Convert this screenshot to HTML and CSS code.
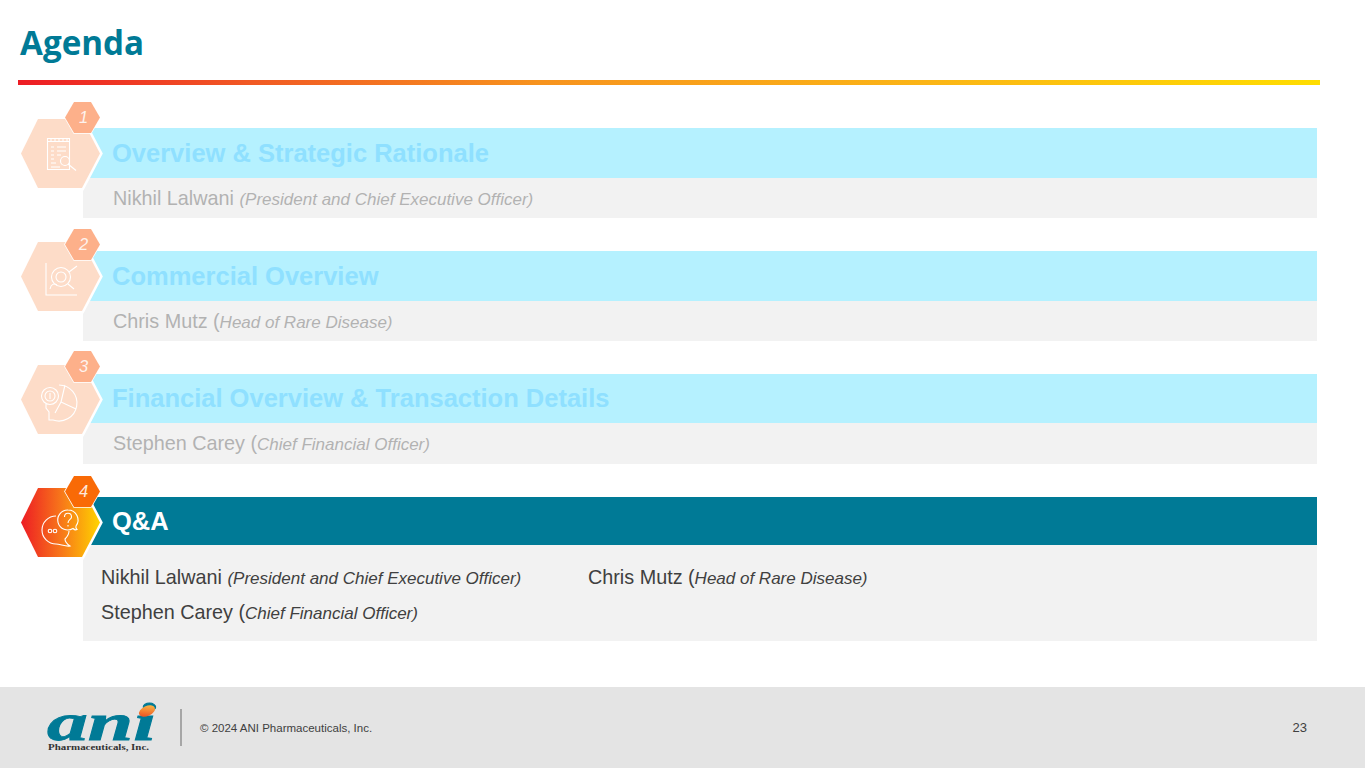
FILE: index.html
```html
<!DOCTYPE html>
<html lang="en">
<head>
<meta charset="utf-8">
<title>Agenda</title>
<link rel="stylesheet" href="styles.css">
</head>
<body>
<div class="slide">
  <header class="top">
    <h1>Agenda</h1>
    <div class="rule"></div>
  </header>
  <main class="list">
    <section class="row faded r1">
      <svg class="hex" viewBox="0 0 86 75"><polygon class="hp" points="3,37.500 20,3 64,3 82,37.500 64,72 20,72"/>
        <g class="ic"><path d="M29.500 22.500h22v31h-22zM29.500 25.500h22M33 22v3M37 22v3M41 22v3M45 22v3M49 22v3M33 31h3M39 31h9M33 35h3M39 35h9M33 39h3M39 39h4M33 43h3M33 47h5M33 51h9"/><circle cx="47" cy="45" r="4.500"/><path d="M50 48l8 6.500"/></g></svg>
      <div class="mini"><svg viewBox="0 0 39 35"><polygon points="2,17.500 11,2 28,2 37,17.500 28,33 11,33"/></svg><span>1</span></div>
      <div class="head">Overview &amp; Strategic Rationale</div>
      <div class="sub"><span class="person">Nikhil Lalwani <em>(President and Chief Executive Officer)</em></span></div>
    </section>
    <section class="row faded r2">
      <svg class="hex" viewBox="0 0 86 75"><polygon class="hp" points="3,37.500 20,3 64,3 82,37.500 64,72 20,72"/>
        <g class="ic"><path d="M28 24v32h31"/><circle cx="43" cy="38" r="9.500"/><circle cx="43" cy="38" r="5"/><path d="M50 45l6 5M32 50c1-5 4-6 7-4M51 33l8-6"/></g></svg>
      <div class="mini"><svg viewBox="0 0 39 35"><polygon points="2,17.500 11,2 28,2 37,17.500 28,33 11,33"/></svg><span>2</span></div>
      <div class="head">Commercial Overview</div>
      <div class="sub"><span class="person">Chris Mutz (<em>Head of Rare Disease)</em></span></div>
    </section>
    <section class="row faded r3">
      <svg class="hex" viewBox="0 0 86 75"><polygon class="hp" points="3,37.500 20,3 64,3 82,37.500 64,72 20,72"/>
        <g class="ic"><path d="M41 23a18 18 0 1 1-6 35h-4v-8l-3-4v-4M47 23l-4 17 15 7M43 40l-6 11"/><circle cx="32" cy="34" r="8.500"/><circle cx="32" cy="34" r="5"/><path d="M32 31v6"/></g></svg>
      <div class="mini"><svg viewBox="0 0 39 35"><polygon points="2,17.500 11,2 28,2 37,17.500 28,33 11,33"/></svg><span>3</span></div>
      <div class="head">Financial Overview &amp; Transaction Details</div>
      <div class="sub"><span class="person">Stephen Carey (<em>Chief Financial Officer)</em></span></div>
    </section>
    <section class="row current r4">
      <svg class="hex" viewBox="0 0 86 75">
        <defs><linearGradient id="heat" x1="0" x2="1" y1="0" y2="0"><stop offset="0" stop-color="#ed1c24"/><stop offset="0.500" stop-color="#f7751a"/><stop offset="1" stop-color="#ffd400"/></linearGradient></defs>
        <polygon class="hp hot" points="3,37.500 20,3 64,3 82,37.500 64,72 20,72"/>
        <g class="ic"><path d="M38 31A14 14 0 1 0 38 59C42 59 48 62 52 61C49 59 47 56 47 54C50 51 51 49 51 46"/><circle cx="32" cy="46" r="1.800"/><circle cx="37" cy="46" r="1.800"/><path d="M50 25a10 10 0 1 0 5 18.500c1 1 3 1.500 4 1-1-1-1.500-2-1-3.500A10 10 0 0 0 50 25z"/><path d="M46.500 32c0-5 7-5 7 0 0 2.500-3.500 2.500-3.500 6M50 40v1.500"/></g></svg>
      <div class="mini"><svg viewBox="0 0 39 35"><polygon points="2,17.500 11,2 28,2 37,17.500 28,33 11,33"/></svg><span>4</span></div>
      <div class="head">Q&amp;A</div>
      <div class="sub grid">
        <span class="person">Nikhil Lalwani <em>(President and Chief Executive Officer)</em></span>
        <span class="person">Chris Mutz (<em>Head of Rare Disease)</em></span>
        <span class="person">Stephen Carey (<em>Chief Financial Officer)</em></span>
      </div>
    </section>
  </main>
  <footer class="foot">
    <svg class="logo" viewBox="0 0 112 48">
      <defs><linearGradient id="dot" x1="0" x2="1" y1="1" y2="0"><stop offset="0" stop-color="#e8401c"/><stop offset="1" stop-color="#ffc84a"/></linearGradient></defs>
      <text class="ani" x="1" y="36" textLength="109" lengthAdjust="spacingAndGlyphs">ani</text>
      <ellipse cx="101" cy="7" rx="8.500" ry="5" transform="rotate(-25 101 7)" fill="url(#dot)"/>
      <text class="pharma" x="2" y="46" textLength="101" lengthAdjust="spacingAndGlyphs">Pharmaceuticals, Inc.</text>
    </svg>
    <div class="sep"></div>
    <div class="copy">© 2024 ANI Pharmaceuticals, Inc.</div>
    <div class="page">23</div>
  </footer>
</div>
</body>
</html>
```
FILE: styles.css
```css
* { box-sizing: border-box; }
html, body { margin: 0; padding: 0; background: #fff; }
.slide {
  width: 1365px; height: 768px; overflow: hidden;
  display: flex; flex-direction: column;
  font-family: "Liberation Sans", Arial, sans-serif;
}
.top { padding: 0 45px 0 18px; }
.top h1 {
  margin: 0; height: 80px; padding: 21px 0 0 2px;
  font: 700 33.200px/44px "Open Sans", sans-serif;
  color: #007a96;
}
.rule {
  height: 5px;
  background: linear-gradient(90deg, #ed1c24 0%, #f15a24 18%, #f7931e 40%, #fbb516 70%, #ffdd00 100%);
}
.list {
  flex: 1; padding: 43px 48.500px 0 83px;
  display: flex; flex-direction: column; gap: 33px;
}
.row { position: relative; }
.head {
  height: 50px; padding-left: 29px;
  display: flex; align-items: center;
  font-size: 25.500px; font-weight: 700;
  background: #007a96; color: #fff;
}
.sub {
  height: 40px; padding-left: 30px;
  display: flex; align-items: center;
  background: #f2f2f2; color: #404040;
  font-size: 19.800px;
}
.person em { font-size: 17px; }
.faded .head { background: #b5f1ff; color: #8fe0ff; }
.faded .sub { color: #b2b2b2; }
.r3 .head { height: 49px; }
.r3 .sub { height: 41px; }
.r4 .head { height: 48px; }
.grid {
  height: 96px; padding: 15px 0 0 18px;
  display: grid; grid-template-columns: 487px 1fr;
  grid-auto-rows: 35px; align-items: center; align-content: start;
}
.hex {
  position: absolute; left: -65px; top: -12px;
  width: 86px; height: 75px; z-index: 1;
}
.hp { fill: #fddcc8; stroke: #fff; stroke-width: 5; paint-order: stroke; }
.hp.hot { fill: url(#heat); }
.ic path, .ic circle { fill: none; stroke: #fff; stroke-width: 1.100; }
.mini {
  position: absolute; left: -20px; top: -28px;
  width: 39px; height: 35px; z-index: 2;
  display: flex; align-items: center; justify-content: center;
  color: #fff; font-size: 16.500px; font-style: italic;
}
.mini svg { position: absolute; inset: 0; width: 100%; height: 100%; }
.mini polygon { fill: #fdb08a; stroke: #fff; stroke-width: 1.500; paint-order: stroke; }
.mini span { position: relative; left: 1px; opacity: 0.850; }
.r2 .mini { top: -24px; }
.r3 .mini { top: -25px; }
.r4 .mini { top: -23px; }
.r4 .mini polygon { fill: #f96a06; }
.foot {
  height: 81px; background: #e4e4e4;
  display: flex; align-items: center;
  padding: 0 58px 0 46px;
}
.logo { width: 112px; height: 48px; flex: none; overflow: visible; }
.ani {
  font: italic 700 52px "Liberation Serif", serif;
  fill: #007a96; stroke: #007a96; stroke-width: 0.800;
}
.pharma { font: 700 9px "Liberation Serif", serif; fill: #333; }
.sep { width: 2px; height: 37px; background: #a6a6a6; margin-left: 22px; flex: none; }
.copy { margin-left: 18px; font-size: 11.500px; color: #404040; }
.page { margin-left: auto; font-size: 13px; color: #404040; }
```
